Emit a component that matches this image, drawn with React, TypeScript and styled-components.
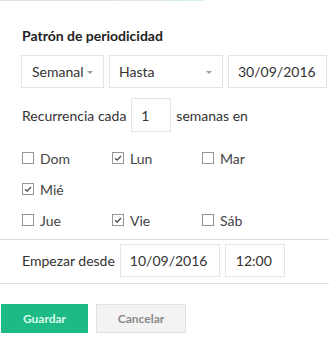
import React from "react";
import styled, { createGlobalStyle } from "styled-components";

const Global = createGlobalStyle`
  html, body { margin: 0; padding: 0; background: #fff; }
  body { font-family: Lato, "Open Sans", sans-serif; color: #333; font-size: 14px; }
  * { box-sizing: border-box; }
`;

const Page = styled.div`
  width: 329px;
  height: 362px;
  position: relative;
  overflow: hidden;
`;

const TopLine = styled.div`
  width: 205px;
  height: 1px;
  background: linear-gradient(to right, #e2e2e2 0%, #e2e2e2 55%, #d6f3ea 100%);
`;

const Section = styled.div`
  padding-left: 21px;
`;

const Heading = styled.div`
  font-weight: 700;
  font-size: 14px;
  line-height: 16px;
  margin-top: 27px;
  margin-left: 1px;
  color: #222;
`;

const Row = styled.div<{ $gap: number; $mt: number }>`
  display: flex;
  align-items: center;
  gap: ${(p) => p.$gap}px;
  margin-top: ${(p) => p.$mt}px;
`;

const Field = styled.div<{ $w: number; $h?: number; $pl?: number }>`
  width: ${(p) => p.$w}px;
  height: ${(p) => p.$h ?? 33}px;
  border: 1px solid #e4e4e4;
  display: flex;
  align-items: center;
  justify-content: space-between;
  padding: 0 10px 0 ${(p) => p.$pl ?? 9}px;
  font-size: 14px;
  color: #333;
  background: #fff;
`;

const Caret = styled.span`
  width: 0;
  height: 0;
  border-left: 3px solid transparent;
  border-right: 3px solid transparent;
  border-top: 3px solid #a0a0a0;
  margin-top: 1px;
`;

const Label = styled.span<{ $ml?: number }>`
  font-size: 14px;
  margin-left: ${(p) => p.$ml ?? 0}px;
`;

const DayRow = styled.div<{ $mt: number }>`
  display: grid;
  grid-template-columns: 90px 90px 90px;
  margin-top: ${(p) => p.$mt}px;
  height: 18px;
  align-items: center;
`;

const Day = styled.label`
  display: flex;
  align-items: center;
  gap: 6px;
  font-size: 14px;
  color: #444;
  padding-left: 1px;
`;

const Box = styled.span`
  width: 12px;
  height: 12px;
  border: 1px solid #959595;
  display: inline-flex;
  align-items: center;
  justify-content: center;
  background: #fff;
`;

const Separator = styled.div<{ $mt: number }>`
  height: 1px;
  background: #dedede;
  margin-top: ${(p) => p.$mt}px;
`;

const Buttons = styled.div`
  display: flex;
  gap: 8px;
  margin-top: 20px;
  padding-left: 1px;
`;

const Button = styled.button<{ $primary?: boolean; $w: number }>`
  width: ${(p) => p.$w}px;
  height: 29px;
  font-family: Lato, sans-serif;
  font-weight: 700;
  font-size: 12px;
  border: 1px solid ${(p) => (p.$primary ? "#1dba85" : "#e2e2e2")};
  background: ${(p) => (p.$primary ? "#1dba85" : "#f3f3f3")};
  color: ${(p) => (p.$primary ? "#d9fbea" : "#8a8a8a")};
  padding: 0;
`;

const Check = () => (
  <svg width="10" height="10" viewBox="0 0 10 10">
    <path d="M2 5.2 L4.2 7.2 L8 3" fill="none" stroke="#444" strokeWidth="1.2" />
  </svg>
);

const DayItem = ({ label, checked }: { label: string; checked?: boolean }) => (
  <Day>
    <Box>{checked && <Check />}</Box>
    {label}
  </Day>
);

export default function App() {
  return (
    <Page>
      <Global />
      <TopLine />
      <Section>
        <Heading>Patrón de periodicidad</Heading>
        <Row $gap={5} $mt={11}>
          <Field $w={83} $pl={10}>
            Semanal <Caret />
          </Field>
          <Field $w={114}>
            Hasta <Caret />
          </Field>
          <Field $w={99}>30/09/2016</Field>
        </Row>
        <Row $gap={5} $mt={10}>
          <Label $ml={1}>Recurrencia cada</Label>
          <Field $w={40} $h={34} $pl={9}>
            1
          </Field>
          <Label>semanas en</Label>
        </Row>
        <DayRow $mt={17}>
          <DayItem label="Dom" />
          <DayItem label="Lun" checked />
          <DayItem label="Mar" />
        </DayRow>
        <DayRow $mt={13}>
          <DayItem label="Mié" checked />
        </DayRow>
        <DayRow $mt={13}>
          <DayItem label="Jue" />
          <DayItem label="Vie" checked />
          <DayItem label="Sáb" />
        </DayRow>
      </Section>
      <Separator $mt={10} />
      <Section>
        <Row $gap={5} $mt={4}>
          <Label $ml={1}>Empezar desde</Label>
          <Field $w={100} $pl={9}>
            10/09/2016
          </Field>
          <Field $w={60} $pl={10}>
            12:00
          </Field>
        </Row>
      </Section>
      <Separator $mt={6} />
      <Buttons>
        <Button $primary $w={87}>
          Guardar
        </Button>
        <Button $w={90}>Cancelar</Button>
      </Buttons>
    </Page>
  );
}
